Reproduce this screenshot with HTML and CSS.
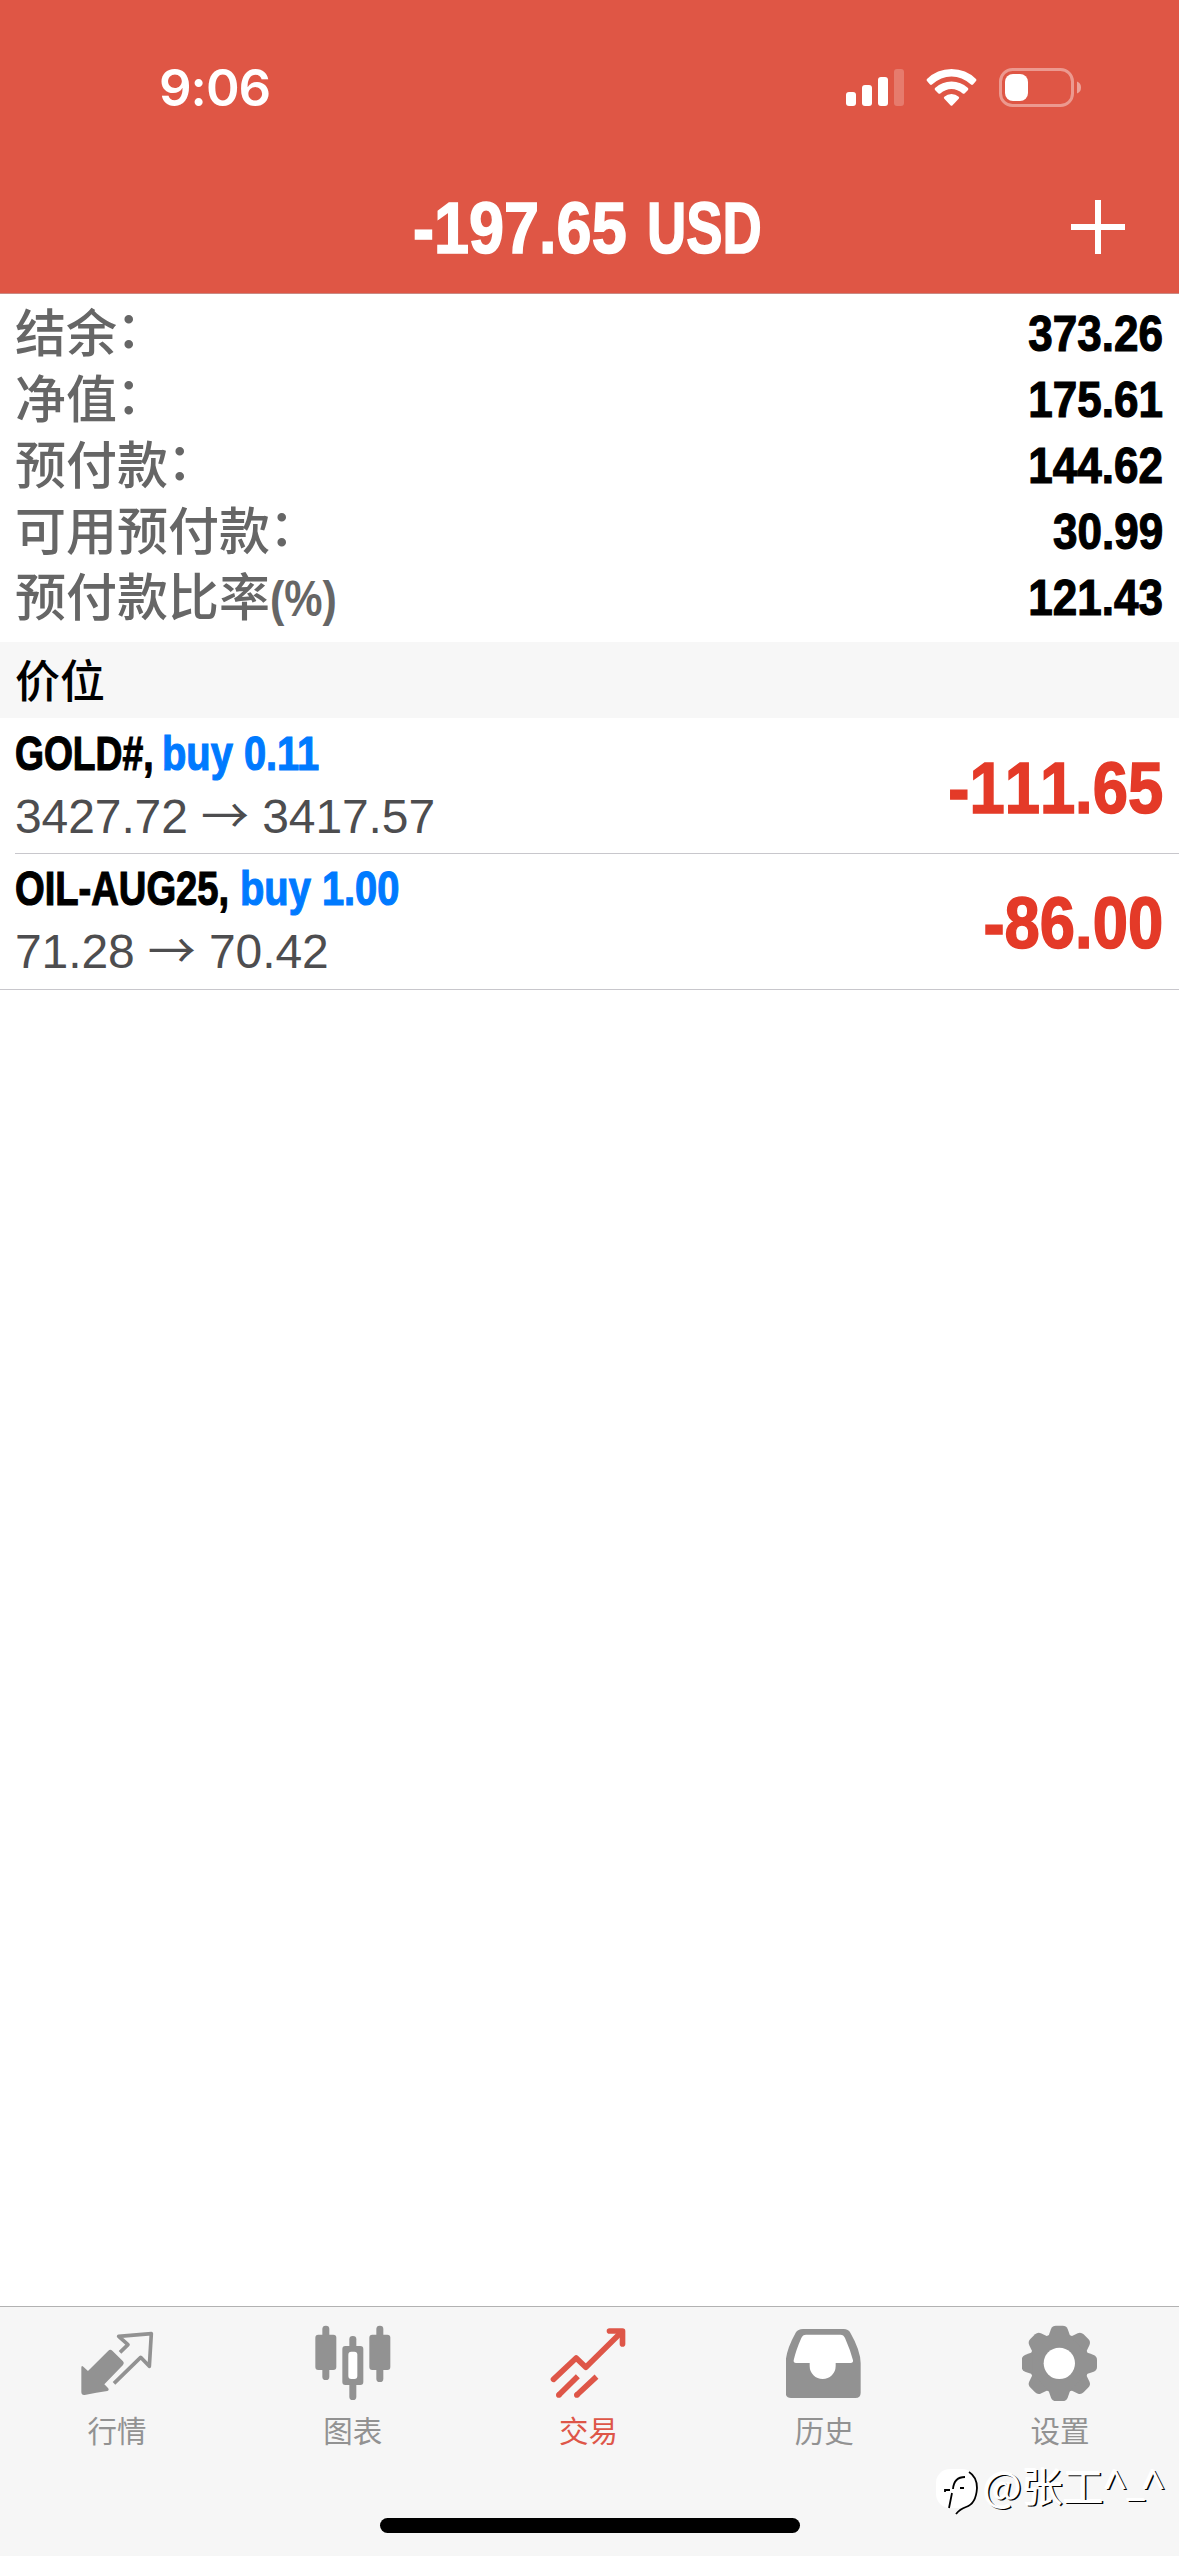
FILE: index.html
```html
<!DOCTYPE html>
<html lang="zh-CN">
<head>
<meta charset="utf-8">
<title>交易</title>
<link rel="stylesheet" href="styles.css">
</head>
<body>
<div class="app">
  <header class="header">
    <div class="status">
      <span class="time">9:06</span>
      <svg class="status-icons" width="240" height="42" viewBox="843 66 240 42">
        <g fill="#fff">
          <rect x="846" y="92" width="10" height="14" rx="3"/>
          <rect x="862" y="85" width="10" height="21" rx="3"/>
          <rect x="878" y="77" width="10" height="29" rx="3"/>
          <rect x="894" y="69" width="10" height="37" rx="3" opacity=".22"/>
          <path d="M951.500 69 Q966 69 976 79 Q977 80 976 81 L973 84.500 Q972 85.300 971 84.500 Q962 76.500 951.500 76.500 Q941 76.500 932 84.500 Q931 85.300 930 84.500 L927 81 Q926 80 927 79 Q937 69 951.500 69Z"/>
          <path d="M951.500 81.500 Q961 81.500 968 88 Q968.700 89 968 90 L964.500 93.500 Q963.700 94.200 962.700 93.500 Q957.500 89 951.500 89 Q945.500 89 940.300 93.500 Q939.300 94.200 938.500 93.500 L935 90 Q934.300 89 935 88 Q942 81.500 951.500 81.500Z"/>
          <path d="M951.500 94 Q955.500 94 958.700 96.700 Q959.700 97.600 958.700 98.700 L952.300 105.400 Q951.500 106.200 950.700 105.400 L944.300 98.700 Q943.300 97.600 944.300 96.700 Q947.500 94 951.500 94Z"/>
          <rect x="1005" y="74" width="23" height="27" rx="8"/>
          <path d="M1077 81.500 Q1081 83 1081 87.500 Q1081 92 1077 93.500Z" opacity=".45"/>
        </g>
        <rect x="1000.500" y="69.500" width="72" height="36" rx="12" fill="none" stroke="#fff" stroke-width="3" opacity=".4"/>
      </svg>
    </div>
    <div class="navbar">
      <h1 class="title"><span class="title-sum">-197.65</span><span class="title-cur">USD</span></h1>
      <svg class="plus" width="54" height="54" viewBox="0 0 54 54"><path d="M27 0V54M0 27H54" stroke="#fff" stroke-width="6"/></svg>
    </div>
  </header>

  <section class="summary">
    <div class="line"><span>结余<i class="colon">：</i></span><b>373.26</b></div>
    <div class="line"><span>净值<i class="colon">：</i></span><b>175.61</b></div>
    <div class="line"><span>预付款<i class="colon">：</i></span><b>144.62</b></div>
    <div class="line"><span>可用预付款<i class="colon">：</i></span><b>30.99</b></div>
    <div class="line"><span>预付款比率<i class="pct">(%)</i></span><b>121.43</b></div>
  </section>

  <h2 class="section-title">价位</h2>

  <ul class="positions">
    <li class="position">
      <div class="info">
        <div class="deal"><span class="symbol gold">GOLD#,</span><span class="side">buy 0.11</span></div>
        <div class="prices">3427.72 <span class="arrow">→</span> 3417.57</div>
      </div>
      <div class="profit">-111.65</div>
    </li>
    <li class="position">
      <div class="info">
        <div class="deal"><span class="symbol oil">OIL-AUG25,</span><span class="side">buy 1.00</span></div>
        <div class="prices">71.28 <span class="arrow">→</span> 70.42</div>
      </div>
      <div class="profit">-86.00</div>
    </li>
  </ul>

  <nav class="tabbar">
    <div class="tabs">
      <div class="tab">
        <svg width="78" height="78" viewBox="237 102 234 234" fill="currentColor">
          <path d="M325 182 Q331 176 337 182 L369 214 Q374 219 369 225 L313 283 L324 294 Q329 300 322 303 Q290 308 254 315 Q244 316 244 306 V233 Q244 225 250 230 L264 243Z"/>
          <path d="M360 187 L384 164 L356 139 L454 131 L448 229 L422 202 L342 280" fill="none" stroke="currentColor" stroke-width="11" stroke-linejoin="round"/>
        </svg>
        <span>行情</span>
      </div>
      <div class="tab">
        <svg width="78" height="78" viewBox="944 102 234 234" fill="currentColor">
          <rect x="945" y="134" width="63" height="106" rx="9"/><rect x="966" y="107" width="21" height="163" rx="10"/>
          <rect x="1107" y="134" width="63" height="106" rx="9"/><rect x="1128" y="107" width="21" height="169" rx="10"/>
          <rect x="1047" y="138" width="21" height="45" rx="10"/><rect x="1047" y="270" width="21" height="60" rx="10"/>
          <rect x="1026" y="168" width="63" height="117" rx="9"/><rect x="1044" y="185" width="27" height="82" rx="9" fill="#fff"/>
        </svg>
        <span>图表</span>
      </div>
      <div class="tab active">
        <svg width="78" height="78" viewBox="301.500 102 234 234" fill="none" stroke="currentColor" stroke-width="17" stroke-linejoin="round">
          <path d="M312 268 L380 204 L409 232 L510 132" stroke-linecap="round"/>
          <path d="M480 123 H519 V162" stroke-linecap="round"/>
          <path d="M495 123 H519 V147Z" fill="currentColor" stroke="none"/>
          <path d="M328 315 L385 259 M382 315 L441 260"/>
          <path d="M328 315h.01M382 315h.01" stroke-linecap="round"/>
        </svg>
        <span>交易</span>
      </div>
      <div class="tab">
        <svg width="78" height="78" viewBox="1009 102 234 234" fill="currentColor">
          <path d="M1060 117 H1182 Q1196 117 1202 128 Q1233 182 1233 220 V308 Q1233 324 1217 324 H1024 Q1008 324 1008 308 V220 Q1008 182 1038 128 Q1045 117 1060 117Z"/>
          <path d="M1069 134 H1172 Q1182 134 1186 144 Q1202 180 1210 211 Q1211 219 1203 219 H1158 V228 A39 39 0 0 1 1080 228 V219 H1039 Q1031 219 1032 211 Q1039 180 1055 144 Q1059 134 1069 134Z" fill="#fff"/>
        </svg>
        <span>历史</span>
      </div>
      <div class="tab">
        <svg width="78" height="78" viewBox="-112 -118 234 234" fill="currentColor">
          <circle r="90"/>
          <path id="tooth" d="M-33 -80 Q-29 -92 -25 -103 Q-21 -113 -10 -113 H10 Q21 -113 25 -103 Q29 -92 33 -80Z"/>
          <use href="#tooth" transform="rotate(45)"/><use href="#tooth" transform="rotate(90)"/><use href="#tooth" transform="rotate(135)"/>
          <use href="#tooth" transform="rotate(180)"/><use href="#tooth" transform="rotate(225)"/><use href="#tooth" transform="rotate(270)"/><use href="#tooth" transform="rotate(315)"/>
          <circle r="47" fill="#fff"/>
        </svg>
        <span>设置</span>
      </div>
    </div>
    <div class="home-indicator"></div>
  </nav>

  <div class="watermark">
    <svg width="48" height="52" viewBox="0 0 48 52">
      <rect x="1" y="3" width="40" height="39" rx="14" fill="#fff"/>
      <path d="M14 42 L17 27 M15 24 H10 V26 M18 23 Q19 11 30 11 M25 22 H29" fill="none" stroke="#000" stroke-width="1.800"/>
      <path d="M34 6 Q42 11 42 22 Q41 38 31 41 Q25 43 21 48" fill="none" stroke="#000" stroke-width="1.800"/>
    </svg>
    <span class="handle">@张工<span class="caret">^</span><span class="under">_</span><span class="caret">^</span></span>
  </div>
</div>
</body>
</html>
```
FILE: styles.css
```css
* { box-sizing: border-box; }
body { margin: 0; background: #fff; font-family: "Liberation Sans", "Noto Sans CJK SC", sans-serif; }
.app { position: relative; width: 1179px; height: 2556px; display: flex; flex-direction: column; overflow: hidden; }

.header { height: 294px; background: #df5645; border-bottom: 1px solid #c98a83; color: #fff; }
.status { height: 174px; padding: 66px 96px 0 159px; display: flex; justify-content: space-between; align-items: flex-start; }
.time { font: 600 51px/44px Inter, sans-serif; letter-spacing: -1px; }
.status-icons { display: block; }
.navbar { height: 106px; padding: 0 54px 0 413px; display: flex; justify-content: space-between; align-items: center; }
.title { margin: 0; padding-top: 2px; width: 360px; display: flex; font-size: 72px; line-height: 80px; white-space: nowrap; -webkit-text-stroke: 1.6px currentColor; }
.title-sum { width: 234px; transform: scaleX(.875); transform-origin: left; }
.title-cur { transform: scaleX(.755); transform-origin: left; }
.plus { display: block; }

.summary { height: 348px; padding: 7px 16px 0 15px; }
.line { height: 66px; display: flex; justify-content: space-between; line-height: 66px; font-size: 50px; }
.line span { margin-top: -4px; font-family: "Noto Sans CJK SC", sans-serif; font-size: 51px; font-weight: 500; color: #666; white-space: nowrap; }
.line b { transform: scaleX(.88); transform-origin: right; -webkit-text-stroke: 1.2px currentColor; }
.colon { position: relative; top: -4px; left: -1px; font-style: normal; }
.pct { display: inline-block; font: 700 50px/60px "Liberation Sans", sans-serif; transform: scaleX(.86); transform-origin: left; }

.section-title { margin: 0; height: 76px; padding-left: 15px; background: #f7f7f7; font: 500 45px/73px "Noto Sans CJK SC", sans-serif; }

.positions { margin: 0 0 auto; padding: 0; list-style: none; border-bottom: 1px solid #c8c7cc; }
.position { height: 135px; padding: 0 16px 0 15px; display: flex; justify-content: space-between; }
.position + .position { height: 136px; margin-left: 15px; padding-left: 0; border-top: 1px solid #c8c7cc; }
.info { padding-top: 5px; }
.position + .position .info { padding-top: 4px; }
.deal { height: 62px; display: flex; font-size: 48px; font-weight: 700; line-height: 62px; white-space: nowrap; -webkit-text-stroke: 1.2px currentColor; }
.symbol { transform-origin: left; }
.gold { width: 147px; transform: scaleX(.775); }
.oil { width: 225px; transform: scaleX(.795); }
.side { color: #007aff; transform: scaleX(.83); transform-origin: left; }
.prices { height: 62px; font-size: 48px; line-height: 63px; letter-spacing: -0.1px; color: #4d4d4f; white-space: pre; }
.arrow { display: inline-block; font-family: "Noto Sans CJK SC", sans-serif; font-weight: 400; line-height: 1; }
.profit { font-size: 72px; font-weight: 700; line-height: 140px; font-kerning: none; color: #e43a28; transform: scaleX(.88); transform-origin: right; -webkit-text-stroke: 1.6px currentColor; }
.position + .position .profit { line-height: 138px; }

.tabbar { height: 250px; border-top: 1px solid #b2b2b2; background: #f6f6f6; }
.tabs { display: flex; height: 211px; padding-top: 17px; }
.tab { flex: 1; display: flex; flex-direction: column; align-items: center; color: #929292; }
.tab svg { display: block; }
.tab span { margin: 5px 2px 0 0; font: 400 29.500px/44px "Noto Sans CJK SC", sans-serif; }
.tab.active { color: #de5648; }
.home-indicator { width: 420px; height: 15px; margin: 0 auto; border-radius: 8px; background: #000; }

.watermark { position: absolute; left: 935px; top: 2466px; display: flex; color: #fff; }
.handle { display: flex; margin-top: -6px; font: 400 41px/48px "Noto Sans CJK SC", sans-serif; text-shadow: 1.500px 1px 0 #000, -1px -1px 0 #fff; white-space: nowrap; }
.caret { width: 23px; font-family: "Noto Sans", sans-serif; }
.under { width: 15px; padding-left: 1px; font: 30px/50px "Liberation Sans", sans-serif; }
```
